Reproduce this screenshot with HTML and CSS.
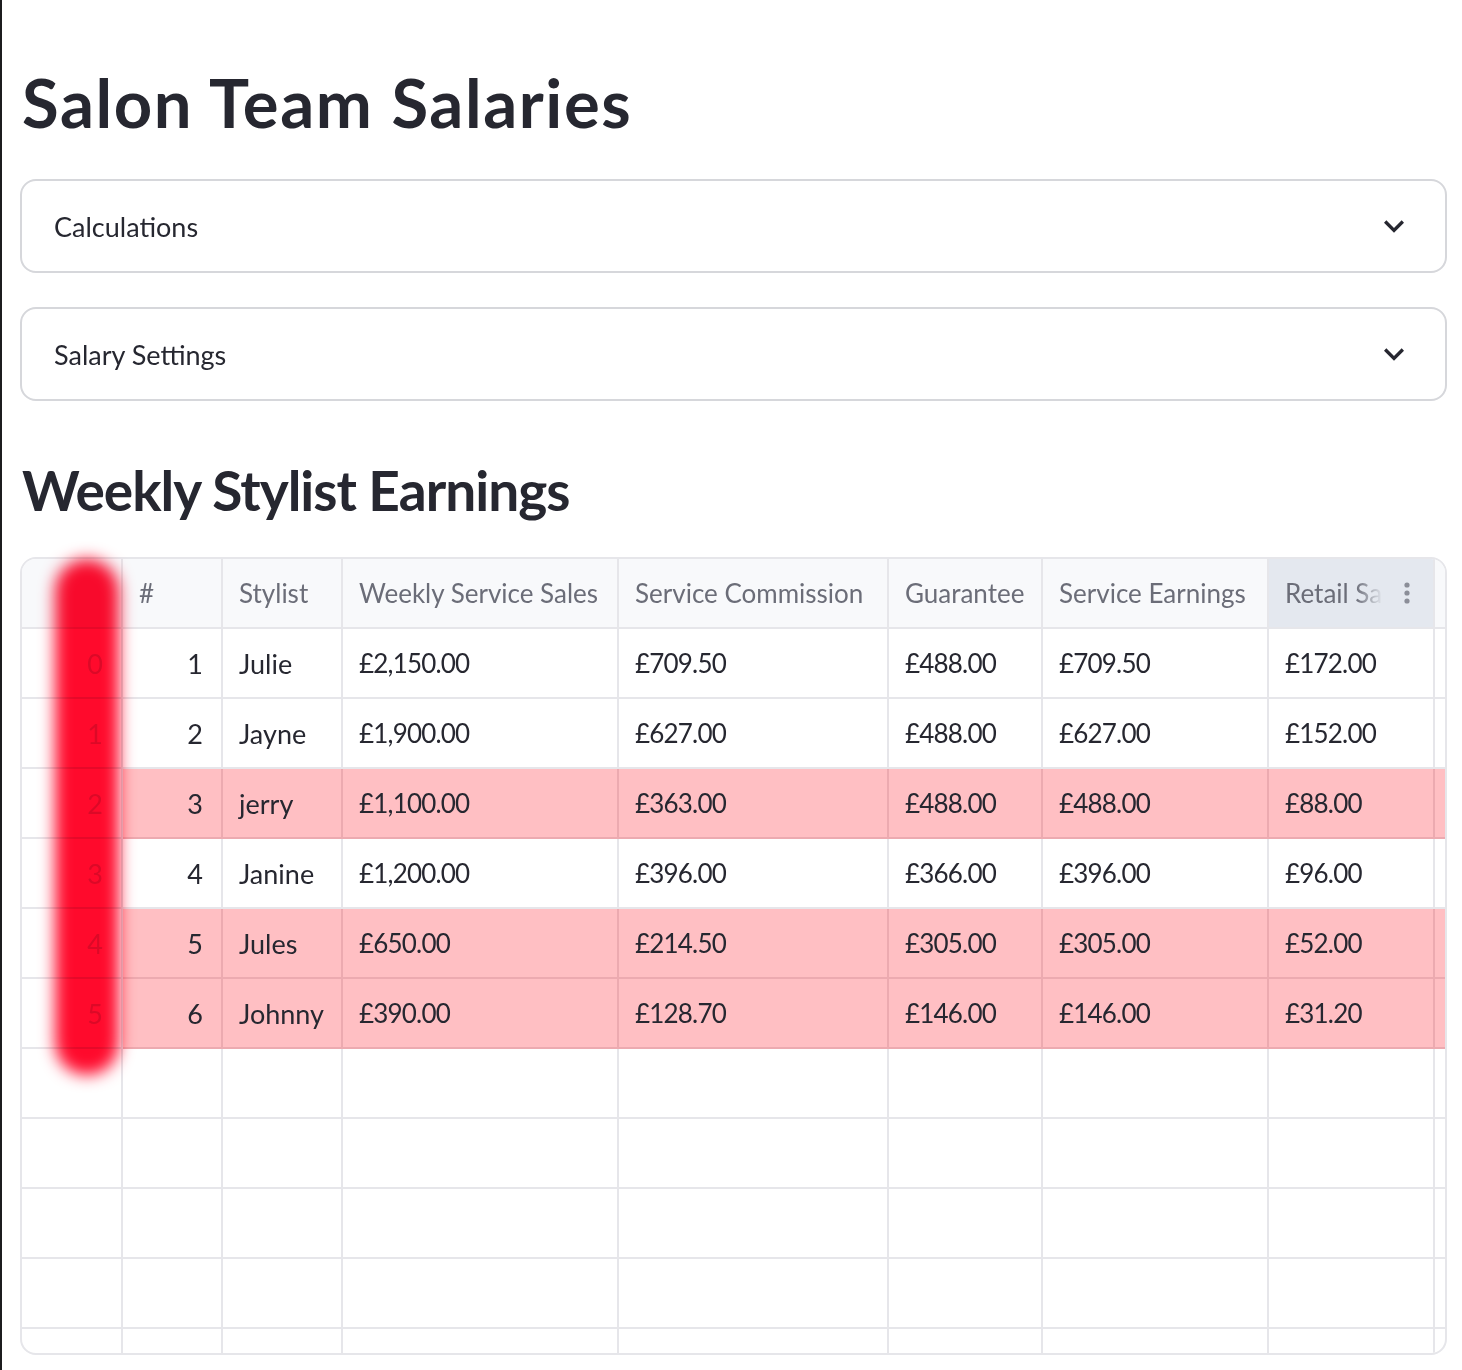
FILE: index.html
```html
<!DOCTYPE html>
<html>
<head>
<meta charset="utf-8">
<link rel="stylesheet" href="styles.css">
</head>
<body>
<div class="page">
  <h1 class="title">Salon Team Salaries</h1>

  <div class="expander">
    <span class="exp-label">Calculations</span>
    <svg class="chev" viewBox="0 0 24 24" width="40" height="40"><path d="M16.59 8.59L12 13.17 7.41 8.59 6 10l6 6 6-6z"/></svg>
  </div>
  <div class="expander">
    <span class="exp-label">Salary Settings</span>
    <svg class="chev" viewBox="0 0 24 24" width="40" height="40"><path d="M16.59 8.59L12 13.17 7.41 8.59 6 10l6 6 6-6z"/></svg>
  </div>

  <h2 class="subtitle">Weekly Stylist Earnings</h2>

  <div class="grid-wrap">
    <div class="grid">
      <div class="c hd idx"></div>
      <div class="c hd">#</div>
      <div class="c hd">Stylist</div>
      <div class="c hd">Weekly Service Sales</div>
      <div class="c hd">Service Commission</div>
      <div class="c hd">Guarantee</div>
      <div class="c hd">Service Earnings</div>
      <div class="c hd hover"><span class="fade">Retail Sales</span>
        <svg class="kebab" viewBox="0 0 8 24" width="8" height="24"><circle cx="4" cy="4" r="2.6"/><circle cx="4" cy="12" r="2.6"/><circle cx="4" cy="20" r="2.6"/></svg>
      </div>
      <div class="c hd last"></div>

      <div class="c idx num">0</div><div class="c num">1</div><div class="c">Julie</div><div class="c m">£2,150.00</div><div class="c m">£709.50</div><div class="c m">£488.00</div><div class="c m">£709.50</div><div class="c m">£172.00</div><div class="c last"></div>

      <div class="c idx num">1</div><div class="c num">2</div><div class="c">Jayne</div><div class="c m">£1,900.00</div><div class="c m">£627.00</div><div class="c m">£488.00</div><div class="c m">£627.00</div><div class="c m">£152.00</div><div class="c last"></div>

      <div class="c idx num">2</div><div class="c num pk">3</div><div class="c pk">jerry</div><div class="c m pk">£1,100.00</div><div class="c m pk">£363.00</div><div class="c m pk">£488.00</div><div class="c m pk">£488.00</div><div class="c m pk">£88.00</div><div class="c last pk"></div>

      <div class="c idx num">3</div><div class="c num">4</div><div class="c">Janine</div><div class="c m">£1,200.00</div><div class="c m">£396.00</div><div class="c m">£366.00</div><div class="c m">£396.00</div><div class="c m">£96.00</div><div class="c last"></div>

      <div class="c idx num">4</div><div class="c num pk">5</div><div class="c pk">Jules</div><div class="c m pk">£650.00</div><div class="c m pk">£214.50</div><div class="c m pk">£305.00</div><div class="c m pk">£305.00</div><div class="c m pk">£52.00</div><div class="c last pk"></div>

      <div class="c idx num">5</div><div class="c num pk">6</div><div class="c pk">Johnny</div><div class="c m pk">£390.00</div><div class="c m pk">£128.70</div><div class="c m pk">£146.00</div><div class="c m pk">£146.00</div><div class="c m pk">£31.20</div><div class="c last pk"></div>

      <div class="c idx"></div><div class="c"></div><div class="c"></div><div class="c"></div><div class="c"></div><div class="c"></div><div class="c"></div><div class="c"></div><div class="c last"></div>
      <div class="c idx"></div><div class="c"></div><div class="c"></div><div class="c"></div><div class="c"></div><div class="c"></div><div class="c"></div><div class="c"></div><div class="c last"></div>
      <div class="c idx"></div><div class="c"></div><div class="c"></div><div class="c"></div><div class="c"></div><div class="c"></div><div class="c"></div><div class="c"></div><div class="c last"></div>
      <div class="c idx"></div><div class="c"></div><div class="c"></div><div class="c"></div><div class="c"></div><div class="c"></div><div class="c"></div><div class="c"></div><div class="c last"></div>
      <div class="c idx"></div><div class="c"></div><div class="c"></div><div class="c"></div><div class="c"></div><div class="c"></div><div class="c"></div><div class="c"></div><div class="c last"></div>
    </div>
    <div class="scribble"></div>
  </div>
</div>
</body>
</html>
```

FILE: styles.css
```css
html, body {
  margin: 0;
  padding: 0;
  background: #ffffff;
}

body {
  font-family: "Lato", "Noto Sans", sans-serif;
  color: #31333f;
}

.page {
  min-height: 1370px;
  box-sizing: border-box;
  border-left: 2px solid #1c1c1e;
  padding: 0 15px 0 18px;
  overflow: hidden;
}

.title {
  margin: 62px 0 0 2px;
  font-size: 67px;
  line-height: 80px;
  font-weight: 700;
  color: #262730;
  letter-spacing: 1.6px;
}

.expander {
  margin-top: 37px;
  height: 94px;
  box-sizing: border-box;
  border: 2px solid #d6d7db;
  border-radius: 16px;
  display: flex;
  align-items: center;
  justify-content: space-between;
  padding: 0 31px 0 32px;
}
.expander + .expander {
  margin-top: 34px;
}

.exp-label {
  font-size: 27px;
  color: #262730;
}

.chev {
  fill: #262730;
  display: block;
}

.subtitle {
  margin: 54px 0 0 2px;
  font-size: 55px;
  line-height: 70px;
  font-weight: 700;
  color: #262730;
  letter-spacing: -1px;
}

.grid-wrap {
  position: relative;
  margin-top: 32px;
}

.grid {
  height: 798px;
  box-sizing: border-box;
  border: 2px solid #e6e6ea;
  border-radius: 16px;
  overflow: hidden;
  display: grid;
  grid-template-columns: 101px 100px 120px 276px 270px 154px 226px 166px 10px;
  grid-auto-rows: 70px;
  align-content: start;
}

.c {
  box-sizing: border-box;
  border-right: 2px solid #e6e6ea;
  border-bottom: 2px solid #e6e6ea;
  display: flex;
  align-items: center;
  padding: 0 16px 0 16px;
  font-size: 27px;
  color: #262730;
  white-space: nowrap;
  overflow: hidden;
}

.c.m {
  font-size: 26px;
  letter-spacing: -0.8px;
}

.c.last {
  border-right: none;
  padding: 0;
}

.hd {
  height: 70px;
  background: #f8f9fb;
  color: #6b6d78;
  font-size: 26px;
}
.hd.hover {
  background: #e4e8ef;
  justify-content: space-between;
  padding-right: 22px;
}

.fade {
  display: block;
  width: 98px;
  overflow: hidden;
  -webkit-mask-image: linear-gradient(to right, #000 72%, transparent 100%);
  mask-image: linear-gradient(to right, #000 72%, transparent 100%);
}

.kebab {
  fill: #8b8e98;
  display: block;
}

.num {
  justify-content: flex-end;
  padding-right: 18px;
}

.idx {
  color: #dcdce2;
}

.pk {
  background: #ffbfc3;
  border-color: #ecaab0;
}

.scribble {
  position: absolute;
  left: 35px;
  top: 2px;
  width: 64px;
  height: 516px;
  border-radius: 32px;
  background: #ff0a2c;
  filter: blur(8px);
  mix-blend-mode: multiply;
}
```
